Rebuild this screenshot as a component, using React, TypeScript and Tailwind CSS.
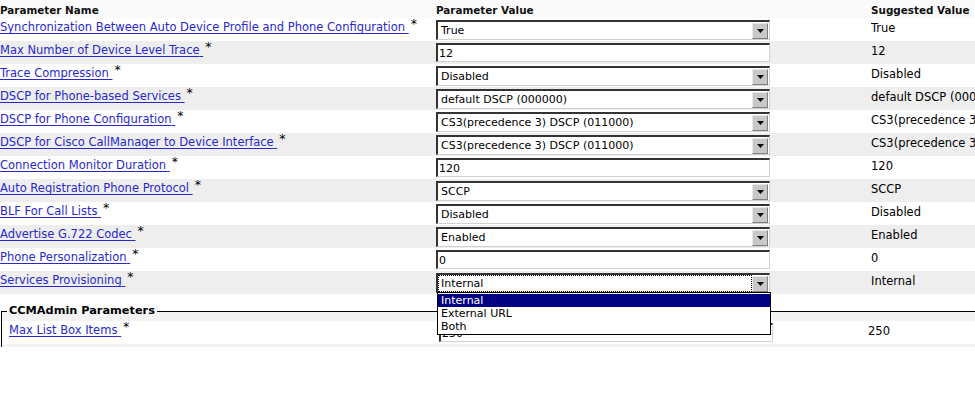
import React from "react";

const FONT = { fontFamily: '"DejaVu Sans", Verdana, sans-serif' };

type Row = { name: string; kind: "select" | "input"; value: string; suggested: string };

const rows: Row[] = [
  { name: "Synchronization Between Auto Device Profile and Phone Configuration", kind: "select", value: "True", suggested: "True" },
  { name: "Max Number of Device Level Trace", kind: "input", value: "12", suggested: "12" },
  { name: "Trace Compression", kind: "select", value: "Disabled", suggested: "Disabled" },
  { name: "DSCP for Phone-based Services", kind: "select", value: "default DSCP (000000)", suggested: "default DSCP (000000)" },
  { name: "DSCP for Phone Configuration", kind: "select", value: "CS3(precedence 3) DSCP (011000)", suggested: "CS3(precedence 3) DSCP (011000)" },
  { name: "DSCP for Cisco CallManager to Device Interface", kind: "select", value: "CS3(precedence 3) DSCP (011000)", suggested: "CS3(precedence 3) DSCP (011000)" },
  { name: "Connection Monitor Duration", kind: "input", value: "120", suggested: "120" },
  { name: "Auto Registration Phone Protocol", kind: "select", value: "SCCP", suggested: "SCCP" },
  { name: "BLF For Call Lists", kind: "select", value: "Disabled", suggested: "Disabled" },
  { name: "Advertise G.722 Codec", kind: "select", value: "Enabled", suggested: "Enabled" },
  { name: "Phone Personalization", kind: "input", value: "0", suggested: "0" },
  { name: "Services Provisioning", kind: "select", value: "Internal", suggested: "Internal" },
];

function Arrow() {
  return (
    <div className="flex h-[16px] w-[16px] shrink-0 items-center justify-center border border-t-[#e8e8e8] border-l-[#e8e8e8] border-b-[#808080] border-r-[#808080] bg-[#c8c8c8]">
      <svg width="7" height="4" viewBox="0 0 7 4">
        <path d="M0 0 H7 L3.5 4 Z" fill="#000" />
      </svg>
    </div>
  );
}

function SelectBox({ value, focused, open }: { value: string; focused?: boolean; open?: boolean }) {
  return (
    <div className="relative">
      <div className="flex h-[20px] w-[334px] items-center border-t-2 border-l-2 border-t-[#333] border-l-[#333] border-b border-r border-b-[#d4d0c8] border-r-[#d4d0c8] bg-white pr-px">
        <div className={"flex h-full flex-1 items-center pl-[3px] " + (focused ? "outline outline-1 outline-dotted outline-black -outline-offset-1" : "")}>
          <span className="text-[11px] leading-none text-black">{value}</span>
        </div>
        <Arrow />
      </div>
      {open && (
        <div className="absolute left-px top-[19px] z-10 flex w-[334px] flex-col border border-black bg-white py-px">
          <div className="h-[13px] bg-[#000080] pl-[3px] text-[11px] leading-[13px] text-white">Internal</div>
          <div className="h-[13px] pl-[3px] text-[11px] leading-[13px] text-black">External URL</div>
          <div className="h-[13px] pl-[3px] text-[11px] leading-[13px] text-black">Both</div>
        </div>
      )}
    </div>
  );
}

function InputBox({ value, w = 334 }: { value: string; w?: number }) {
  return (
    <div
      className="flex h-[19px] items-center border-t-2 border-l-2 border-t-[#333] border-l-[#333] border-b border-r border-b-[#d4d0c8] border-r-[#d4d0c8] bg-white pl-px"
      style={{ width: w }}
    >
      <span className="text-[11px] leading-none text-black">{value}</span>
    </div>
  );
}

function NameCell({ name }: { name: string }) {
  return (
    <div className="flex items-start whitespace-nowrap">
      <span className="text-[11.5px] leading-[14px] text-[#2828d0] underline decoration-[#2828d0] underline-offset-2">{name}&nbsp;</span>
      <span className="ml-[2px] -mt-[3px] text-[12.5px] leading-[14px] text-black">*</span>
    </div>
  );
}

export default function App() {
  return (
    <div className="h-[400px] w-[975px] overflow-hidden bg-white" style={FONT}>
      <div className="flex h-[18px] items-center bg-[#fafafa] pt-[3px] text-[10.4px] font-bold text-[#111]">
        <div className="w-[436px]">Parameter Name</div>
        <div className="w-[435px]">Parameter Value</div>
        <div className="flex-1 whitespace-nowrap">Suggested Value</div>
      </div>
      {rows.map((r, i) => (
        <div key={i} className={"flex h-[23px] " + (i % 2 === 1 ? "bg-[#eeeeee]" : "bg-white")}>
          <div className="flex w-[436px] items-start pt-[2px]">
            <NameCell name={r.name} />
          </div>
          <div className="w-[435px] pt-[2px]">
            {r.kind === "select" ? (
              <SelectBox value={r.value} focused={i === 11} open={i === 11} />
            ) : (
              <InputBox value={r.value} />
            )}
          </div>
          <div className="min-w-0 flex-1 overflow-hidden whitespace-nowrap pt-[3px] text-[11.5px] leading-[14px] text-black">
            {r.suggested}
          </div>
        </div>
      ))}
      <div className="h-[11px]" />
      <fieldset className="m-0 ml-px border-0 border-t border-l border-black bg-[#f3f3f3] p-0 pb-[3px]">
        <legend className="ml-[5px] px-[2px] text-[11.3px] font-bold leading-[12px] text-black">CCMAdmin Parameters</legend>
        <div className="mt-[4px] flex h-[23px] bg-white">
          <div className="flex w-[437px] items-start pl-[7px] pt-[2px]">
            <NameCell name="Max List Box Items" />
          </div>
          <div className="w-[429px] pt-[2px]">
            <InputBox value="250" />
          </div>
          <div className="flex-1 pt-[3px] text-[11.5px] leading-[14px] text-black">250</div>
        </div>
      </fieldset>
    </div>
  );
}
